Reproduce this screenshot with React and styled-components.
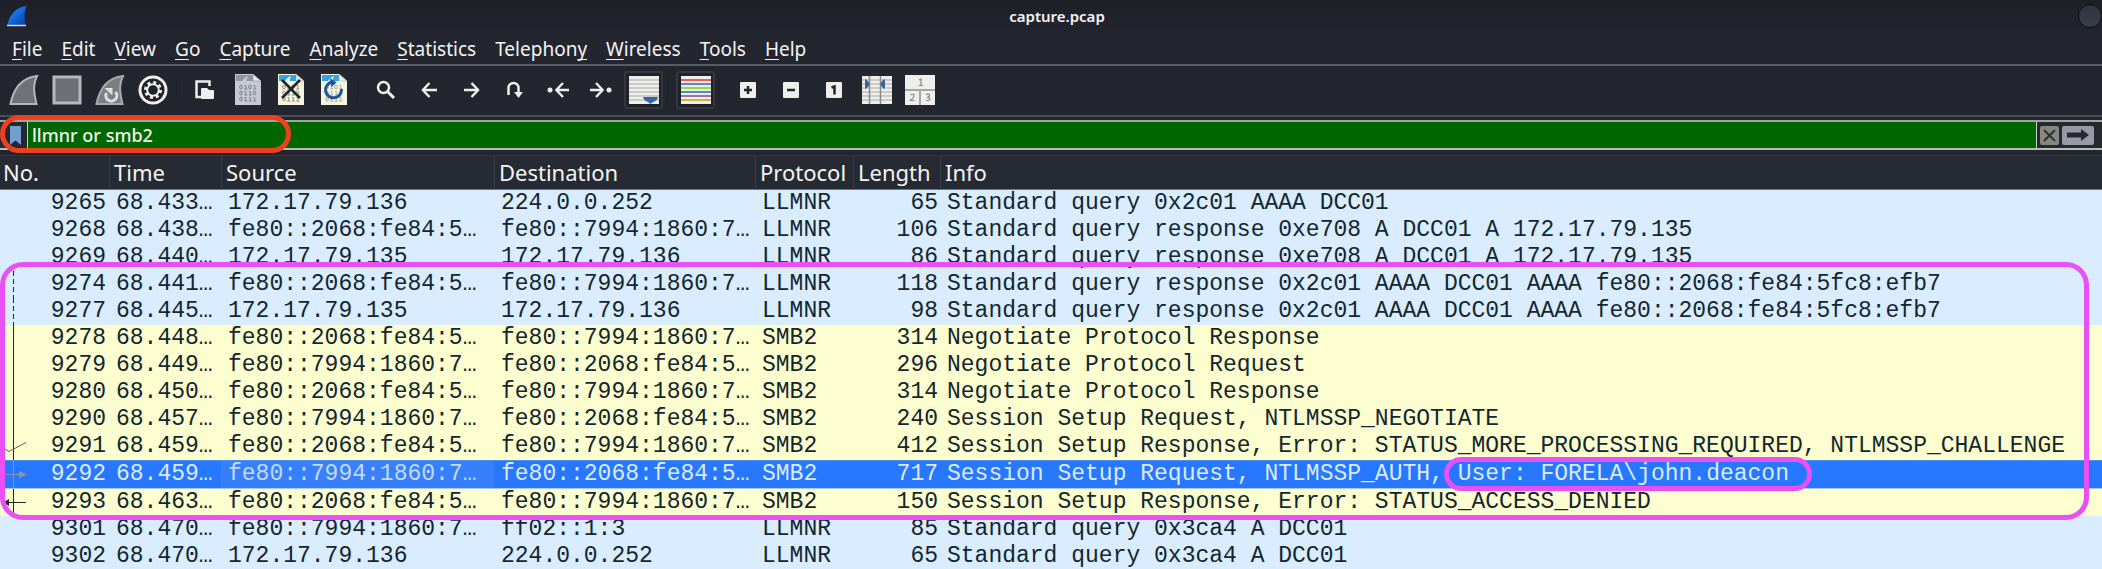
import React from 'react';
import styled, { createGlobalStyle, css } from 'styled-components';

const GlobalStyle = createGlobalStyle`
  * { box-sizing: border-box; }
  body {
    margin: 0;
    height: 100vh;
    overflow: hidden;
    background: #daecff;
    color: #f4f4f4;
    font-family: "Noto Sans", sans-serif;
  }
`;

const Window = styled.main`
  display: flex;
  flex-direction: column;
  min-width: 0;
`;

const TitleBar = styled.header`
  display: grid;
  grid-template-columns: 1fr auto 1fr;
  align-items: center;
  height: 32px;
  padding-left: 6px;
  background: linear-gradient(#1e2028, #22252e);
`;

const Title = styled.h1`
  margin: 0;
  padding-left: 6px;
  font-size: 15px;
  line-height: 20px;
  font-weight: 600;
`;

const WindowButton = styled.button`
  justify-self: end;
  width: 24px;
  height: 24px;
  padding: 0;
  border: 1px solid #0d0f13;
  border-radius: 50%;
  background: linear-gradient(#2f343e, #3a3f4b);
`;

const MenuBar = styled.nav`
  display: flex;
  gap: 19px;
  height: 34px;
  padding: 2px 12px 0;
  background: #23262f;
  border-bottom: 2px solid #595c65;
`;

const MenuItem = styled.button`
  padding: 0;
  border: 0;
  background: none;
  color: inherit;
  font: 19px/28px "Noto Sans", sans-serif;
  height: 30px;

  u {
    text-underline-offset: 3px;
    text-decoration-thickness: 1px;
    text-decoration-skip-ink: none;
  }
`;

const Toolbar = styled.div`
  display: flex;
  align-items: center;
  gap: 4px;
  height: 51px;
  padding: 0 4px 2px;
  background: #23262f;
  border-bottom: 2px solid #4b4f58;
`;

const ToolButton = styled.button`
  display: flex;
  align-items: center;
  justify-content: center;
  width: 39px;
  height: 38px;
  padding: 0;
  border: 2px solid ${(p) => (p.$on ? '#343841' : 'transparent')};
  border-radius: 3px;
  background: ${(p) => (p.$on ? '#1f2229' : 'none')};

  svg { display: block; flex: none; }
`;

const Separator = styled.span`
  width: 5px;
  height: 24px;
  border-left: 1px solid #1d2027;
`;

const FilterBar = styled.form`
  position: relative;
  display: flex;
  height: 38px;
  margin: 0;
  padding: 3px 0 5px;
  background: #22252d;
`;

const FilterFrame = styled.div`
  display: flex;
  align-items: center;
  flex: 1;
  min-width: 0;
  border-top: 2px solid #a2a6a3;
  border-bottom: 2px solid #b9bdb9;
  background: #25282f;
`;

const BookmarkButton = styled.button`
  display: flex;
  justify-content: flex-end;
  width: 27px;
  padding: 0 6px 0 0;
  border: 0;
  background: none;
`;

const FilterInput = styled.input`
  flex: 1;
  min-width: 0;
  align-self: stretch;
  padding: 0 4px;
  border: solid #c4d0c4;
  border-width: 0 1px;
  border-radius: 0;
  outline: 0;
  background: #006600;
  color: #f2f6ef;
  font: 500 18px/26px "Noto Sans", sans-serif;
`;

const FilterActions = styled.div`
  display: flex;
  gap: 3px;
  padding: 0 8px 0 3px;
`;

const FilterButton = styled.button`
  display: flex;
  align-items: center;
  justify-content: center;
  width: ${(p) => p.$width};
  height: 19px;
  padding: 0;
  border: 0;
  border-radius: 2px;
  background: ${(p) => p.$fill};
`;

const FilterHighlight = styled.span`
  position: absolute;
  inset: -2px auto 2px 0;
  width: 291px;
  border: 5px solid #ea411f;
  border-radius: 19px;
  pointer-events: none;
`;

const PacketList = styled.section`
  position: relative;
`;

const PacketTable = styled.table`
  width: 100%;
  table-layout: fixed;
  border-collapse: separate;
  border-spacing: 0;
`;

const Column = styled.col`
  width: ${(p) => p.$width};
`;

const HeaderCell = styled.th`
  height: 35px;
  padding: 0 0 2px ${(p) => (p.$first ? '3px' : '4px')};
  border-top: 1px solid #353840;
  border-bottom: 1px solid #70757e;
  border-left: ${(p) => (p.$first ? '0' : '1px solid #3a3e46')};
  background: #262a33;
  text-align: left;
  white-space: nowrap;
  font-size: 22px;
  line-height: 30px;
  font-weight: 400;
`;

const Cell = styled.td`
  height: 27px;
  padding: 0 2px 0 7px;
  text-align: ${(p) => (p.$right ? 'right' : 'left')};
  white-space: nowrap;
`;

const NumberCell = styled(Cell)`
  padding: 0 3px 0 0;
`;

const NumberContent = styled.div`
  display: flex;
  justify-content: space-between;
  height: 27px;
`;

const PacketRow = styled.tr`
  background: ${(p) => (p.$kind === 'LLMNR' ? '#daecff' : '#fdfecf')};
  color: #12272e;
  font-family: "Liberation Mono", monospace;
  font-size: 23px;
  line-height: 27px;

  ${(p) => p.$selected && css`
    background: #2777ff;
    color: #dbeaff;

    ${Cell} {
      border-top: 1px solid #4d8fee;
      border-bottom: 1px solid #a9c8ef;
    }
    ${Cell}:nth-child(3) {
      background: #3880fb;
      color: #c3dafd;
    }
  `}
`;

const ConversationHighlight = styled.div`
  position: absolute;
  inset: 107px 13px auto 0;
  height: 258px;
  border: 5px solid #e950f8;
  border-radius: 23px;
  pointer-events: none;
`;

const UserHighlight = styled.span`
  position: relative;

  &::after {
    content: "";
    position: absolute;
    inset: -4px -23px -4px -14px;
    border: 5px solid #e950f8;
    border-radius: 17px;
  }
`;

const Svg = ({ w = 30, h = 30, children }) => (
  <svg width={w} height={h} viewBox={`0 0 ${w} ${h}`} fill="none" aria-hidden="true">
    {children}
  </svg>
);

const FIN = 'M1.5 29 C4 16 11 3 28 1 C24.500 8 24 15 27.500 29 Z';

const LogoIcon = () => (
  <Svg w={22} h={22}>
    <defs>
      <linearGradient id="logo" x1="0" y1="0" x2="1" y2="1">
        <stop offset="0" stopColor="#4a9cf4" />
        <stop offset="0.5" stopColor="#1268dc" />
        <stop offset="1" stopColor="#063a9c" />
      </linearGradient>
    </defs>
    <path d="M1 20.500 C4 10 9 2.500 20.500 1 C18 7 18 13 20 20.500 Z" fill="url(#logo)" />
    <path d="M1 20.500 H20" stroke="#c4d8f4" strokeWidth="1.500" />
  </Svg>
);

const StartIcon = () => (
  <Svg><path d={FIN} fill="#6f727a" stroke="#b4b6bb" strokeWidth="2" /></Svg>
);

const StopIcon = () => (
  <Svg><rect x="2" y="2" width="26" height="26" fill="#6c6f77" stroke="#b6b8bd" strokeWidth="3" /></Svg>
);

const RestartIcon = () => (
  <Svg>
    <path d={FIN} fill="#7b7e85" stroke="#a9abb1" strokeWidth="2" />
    <path d="M20.500 17 A5.500 5.500 0 1 1 11.500 18" stroke="#e0e1e4" strokeWidth="3" />
    <path d="M9.500 13 H17.500 V20.500 Z" fill="#e0e1e4" />
  </Svg>
);

const OptionsIcon = () => (
  <Svg>
    <circle cx="15" cy="15" r="14.500" fill="#f0f0f0" />
    <circle cx="15" cy="15" r="11.500" fill="#202228" />
    <circle cx="15" cy="15" r="7.500" stroke="#f0f0f0" strokeWidth="3" strokeDasharray="3 2.890" />
    <circle cx="15" cy="15" r="5.800" stroke="#f0f0f0" strokeWidth="2" />
  </Svg>
);

const OpenIcon = () => (
  <Svg w={20} h={20}>
    <path d="M6 17 H1.500 V1.500 H14.500 V6" stroke="#eeeeec" strokeWidth="2.500" />
    <path d="M6 9 Q6 8 7 8 H12 L14 10 H18 Q19 10 19 11 V18 Q19 19 18 19 H7 Q6 19 6 18 Z" fill="#eeeeec" />
  </Svg>
);

const bits = ['0101', '0110', '0111'];

const FileSheet = ({ paper, band, ink, children }) => (
  <Svg w={26} h={31}>
    <path d="M0 0 H18 L26 7 V31 H0 Z" fill={paper} />
    <path d="M1 1 H18 V7 H1 Z" fill={band} />
    <path d="M6 9 Q8 4 13 2 Q11 5 12 9 Z" fill={paper} />
    <path d="M18 0 L26 7 H18 Z" fill="#e8ecee" stroke={ink} strokeWidth="0.500" />
    {bits.map((row, r) => row.split('').map((bit, c) => (bit === '0'
      ? <ellipse key={`${r}${c}`} cx={6 + c * 4.500} cy={13 + r * 6} rx="1.300" ry="1.900" stroke={ink} />
      : <path key={`${r}${c}`} d={`M${5 + c * 4.500} ${11.5 + r * 6} h1.300 v3.500 m-1.500 0 h3`} stroke={ink} />)))}
    {children}
  </Svg>
);

const SaveIcon = () => <FileSheet paper="#c6c9d1" band="#92959e" ink="#7f838c" />;

const CloseIcon = () => (
  <FileSheet paper="#f5f5e0" band="#2ea5e0" ink="#8f9088">
    <path d="M4 6 L22 24 M22 6 L4 24" stroke="#232629" strokeWidth="2.500" />
  </FileSheet>
);

const ReloadIcon = () => (
  <FileSheet paper="#f5f5e0" band="#2ea5e0" ink="#a9aa9f">
    <path d="M20.500 15 A8 8 0 1 1 11 8" stroke="#23539c" strokeWidth="3" />
    <path d="M9 4 L15.500 8.500 L10.500 13 Z" fill="#23539c" />
  </FileSheet>
);

const FindIcon = () => (
  <Svg w={20} h={20}>
    <circle cx="7.500" cy="7.500" r="5.500" stroke="#eeeeec" strokeWidth="2.500" />
    <path d="M11.500 11.500 L18 18" stroke="#eeeeec" strokeWidth="3" />
  </Svg>
);

const ARROW = { stroke: '#eeeeec', strokeWidth: 2.5, strokeLinejoin: 'round' };

const BackIcon = () => <Svg w={16} h={16}><path d="M16 8 H2 M8.500 1 L1.800 8 L8.500 15" {...ARROW} /></Svg>;
const ForwardIcon = () => <Svg w={16} h={16}><path d="M0 8 H14 M7.500 1 L14.200 8 L7.500 15" {...ARROW} /></Svg>;

const JumpIcon = () => (
  <Svg w={18} h={18}>
    <path d="M2.500 14 V7 A5 5 0 0 1 12.500 7 V12" stroke="#eeeeec" strokeWidth="2.500" />
    <path d="M8 11 H17 L12.500 17 Z" fill="#eeeeec" />
  </Svg>
);

const FirstIcon = () => (
  <Svg w={22} h={16}>
    <circle cx="3" cy="8" r="2.500" fill="#eeeeec" />
    <path d="M22 8 H10 M16 1 L9.300 8 L16 15" {...ARROW} />
  </Svg>
);

const LastIcon = () => (
  <Svg w={22} h={16}>
    <circle cx="19" cy="8" r="2.500" fill="#eeeeec" />
    <path d="M0 8 H12 M6 1 L12.700 8 L6 15" {...ARROW} />
  </Svg>
);

const Lines = ({ colors }) => (
  <>
    <rect width="30" height="28" fill="#eeeeec" />
    {colors.map((c, i) => <path key={i} d={`M0 ${4 + i * 4} H30`} stroke={c} strokeWidth="1.500" />)}
  </>
);

const GREY = Array(6).fill('#bfc0bc');

const AutoScrollIcon = () => (
  <Svg w={30} h={28}>
    <Lines colors={GREY} />
    <path d="M14 21 H29 Q28 25 24 26 L21.500 28 L19 26 Q15 25 14 21 Z" fill="#3465a4" />
  </Svg>
);

const ColorizeIcon = () => (
  <Svg w={30} h={28}>
    <Lines colors={['#ef2929', '#3465a4', '#73d216', '#3465a4', '#75507b', '#c4a000']} />
  </Svg>
);

const ZoomBox = ({ children }) => (
  <Svg w={16} h={16}>
    <rect width="16" height="16" rx="1" fill="#eeeeec" />
    {children}
  </Svg>
);

const ZoomInIcon = () => <ZoomBox><path d="M4 8 H12 M8 4 V12" stroke="#23262f" strokeWidth="2.500" /></ZoomBox>;
const ZoomOutIcon = () => <ZoomBox><path d="M4 8 H12" stroke="#23262f" strokeWidth="2.500" /></ZoomBox>;
const ZoomResetIcon = () => <ZoomBox><path d="M5.500 5.500 L8.500 4.500 V12.500" stroke="#23262f" strokeWidth="2.500" /></ZoomBox>;

const ResizeIcon = () => (
  <Svg w={30} h={28}>
    <Lines colors={GREY} />
    <path d="M7.500 0 V28 M18.500 0 V28" stroke="#8a8c87" strokeWidth="1.500" />
    <path d="M3 3 Q7 5 7.500 8.500 Q7 11 3 13 Z M23 3 Q19 5 18.500 8.500 Q19 11 23 13 Z" fill="#3465a4" />
  </Svg>
);

const LayoutIcon = () => (
  <Svg>
    <rect width="30" height="30" fill="#eeeeec" />
    <path d="M0 15 H30 M15 15 V30" stroke="#a5a7a3" strokeWidth="2" />
    <g stroke="#85878a" strokeWidth="1.200">
      <path d="M14 5 L16 4 V10.500 M13.500 10.500 H18" />
      <path d="M5.500 20 Q7.500 18.500 9 20 Q9.500 22 5.500 25.500 H9.500" />
      <path d="M21 19.500 Q25 18.500 24.500 21 Q24 22.300 22 22.300 Q25 22.500 24.800 24.500 Q24 26 21 25.300" />
    </g>
  </Svg>
);

const toolGroups = [
  [['Start capture', StartIcon], ['Stop capture', StopIcon], ['Restart capture', RestartIcon], ['Capture options', OptionsIcon]],
  [['Open', OpenIcon], ['Save', SaveIcon], ['Close', CloseIcon], ['Reload', ReloadIcon]],
  [['Find packet', FindIcon], ['Back', BackIcon], ['Forward', ForwardIcon], ['Go to packet', JumpIcon],
    ['First packet', FirstIcon], ['Last packet', LastIcon], ['Auto scroll', AutoScrollIcon, true]],
  [['Colorize', ColorizeIcon, true]],
  [['Zoom in', ZoomInIcon], ['Zoom out', ZoomOutIcon], ['Normal size', ZoomResetIcon],
    ['Resize columns', ResizeIcon], ['Reset layout', LayoutIcon]],
];

const menus = [['', 'F', 'ile'], ['', 'E', 'dit'], ['', 'V', 'iew'], ['', 'G', 'o'], ['', 'C', 'apture'],
  ['', 'A', 'nalyze'], ['', 'S', 'tatistics'], ['Telephon', 'y', ''], ['', 'W', 'ireless'], ['', 'T', 'ools'], ['', 'H', 'elp']];

const columns = [['No.', '109px'], ['Time', '112px'], ['Source', '273px'], ['Destination', '261px'],
  ['Protocol', '98px'], ['Length', '87px'], ['Info', 'auto']];

const A = 'fe80::2068:fe84:5…';
const B = 'fe80::7994:1860:7…';
const IP5 = '172.17.79.135';
const IP6 = '172.17.79.136';

const packets = [
  [9265, '68.433…', IP6, '224.0.0.252', 'LLMNR', 65, 'Standard query 0x2c01 AAAA DCC01'],
  [9268, '68.438…', A, B, 'LLMNR', 106, 'Standard query response 0xe708 A DCC01 A 172.17.79.135'],
  [9269, '68.440…', IP5, IP6, 'LLMNR', 86, 'Standard query response 0xe708 A DCC01 A 172.17.79.135'],
  [9274, '68.441…', A, B, 'LLMNR', 118, 'Standard query response 0x2c01 AAAA DCC01 AAAA fe80::2068:fe84:5fc8:efb7', 'dashed'],
  [9277, '68.445…', IP5, IP6, 'LLMNR', 98, 'Standard query response 0x2c01 AAAA DCC01 AAAA fe80::2068:fe84:5fc8:efb7', 'dashed'],
  [9278, '68.448…', A, B, 'SMB2', 314, 'Negotiate Protocol Response', 'line'],
  [9279, '68.449…', B, A, 'SMB2', 296, 'Negotiate Protocol Request', 'line'],
  [9280, '68.450…', A, B, 'SMB2', 314, 'Negotiate Protocol Response', 'line'],
  [9290, '68.457…', B, A, 'SMB2', 240, 'Session Setup Request, NTLMSSP_NEGOTIATE', 'line'],
  [9291, '68.459…', A, B, 'SMB2', 412, 'Session Setup Response, Error: STATUS_MORE_PROCESSING_REQUIRED, NTLMSSP_CHALLENGE', 'check'],
  [9292, '68.459…', B, A, 'SMB2', 717, 'Session Setup Request, NTLMSSP_AUTH, ', 'request', 'User: FORELA\\john.deacon'],
  [9293, '68.463…', A, B, 'SMB2', 150, 'Session Setup Response, Error: STATUS_ACCESS_DENIED', 'response'],
  [9301, '68.470…', B, 'ff02::1:3', 'LLMNR', 85, 'Standard query 0x3ca4 A DCC01'],
  [9302, '68.470…', IP6, '224.0.0.252', 'LLMNR', 65, 'Standard query 0x3ca4 A DCC01'],
];

const RelationMark = ({ type }) => {
  const ink = type === 'request' ? '#8c95a5' : '#1c2b30';
  return (
    <Svg w={28} h={27}>
      {type && <path d="M13.500 0 V27" stroke={ink} strokeDasharray={type === 'dashed' ? '5 3' : undefined} />}
      {type === 'check' && <path d="M3 15 L9 18.500 L26 9.500" stroke="#59635c" />}
      {type === 'request' && <><path d="M0 13.500 H20" stroke={ink} /><path d="M19 10 L27 13.500 L19 17 Z" fill={ink} /></>}
      {type === 'response' && <><path d="M5 13.500 H26" stroke={ink} /><path d="M9 10 L3 13.500 L9 17 Z" fill={ink} /></>}
    </Svg>
  );
};

const Packet = ({ data }) => {
  const [no, time, source, destination, protocol, length, info, mark, user] = data;
  return (
    <PacketRow $kind={protocol} $selected={Boolean(user)}>
      <NumberCell>
        <NumberContent>
          <RelationMark type={mark} />
          <span>{no}</span>
        </NumberContent>
      </NumberCell>
      <Cell>{time}</Cell>
      <Cell>{source}</Cell>
      <Cell>{destination}</Cell>
      <Cell>{protocol}</Cell>
      <Cell $right>{length}</Cell>
      <Cell>{info}{user && <UserHighlight>{user}</UserHighlight>}</Cell>
    </PacketRow>
  );
};

export default function App() {
  return (
    <>
      <GlobalStyle />
      <Window>
        <TitleBar>
          <LogoIcon />
          <Title>capture.pcap</Title>
          <WindowButton aria-label="Close window" />
        </TitleBar>
        <MenuBar aria-label="Main menu">
          {menus.map(([before, key, after]) => (
            <MenuItem key={before + key + after}>{before}<u>{key}</u>{after}</MenuItem>
          ))}
        </MenuBar>
        <Toolbar role="toolbar" aria-label="Capture tools">
          {toolGroups.map((group, i) => (
            <React.Fragment key={i}>
              {i > 0 && <Separator />}
              {group.map(([label, Icon, on]) => (
                <ToolButton key={label} aria-label={label} $on={on}><Icon /></ToolButton>
              ))}
            </React.Fragment>
          ))}
        </Toolbar>
        <FilterBar onSubmit={(e) => e.preventDefault()}>
          <FilterFrame>
            <BookmarkButton type="button" aria-label="Filter bookmarks">
              <Svg w={11} h={19}><path d="M0 0 H11 V19 L5.500 14.500 L0 19 Z" fill="#729fcf" /></Svg>
            </BookmarkButton>
            <FilterInput aria-label="Display filter" defaultValue="llmnr or smb2" spellCheck={false} />
            <FilterActions>
              <FilterButton type="button" aria-label="Clear filter" $width="19px" $fill="#86877f">
                <Svg w={13} h={13}><path d="M1 1 L12 12 M12 1 L1 12" stroke="#2e3036" strokeWidth="2" /></Svg>
              </FilterButton>
              <FilterButton type="submit" aria-label="Apply filter" $width="32px" $fill="#9799a3">
                <Svg w={22} h={12}><path d="M0 3.500 H14 V0 L22 6 L14 12 V8.500 H0 Z" fill="#262932" /></Svg>
              </FilterButton>
            </FilterActions>
          </FilterFrame>
          <FilterHighlight />
        </FilterBar>
        <PacketList>
          <PacketTable>
            <colgroup>
              {columns.map(([name, width]) => <Column key={name} $width={width} />)}
            </colgroup>
            <thead>
              <tr>
                {columns.map(([name], i) => <HeaderCell key={name} scope="col" $first={i === 0}>{name}</HeaderCell>)}
              </tr>
            </thead>
            <tbody>
              {packets.map((p) => <Packet key={p[0]} data={p} />)}
            </tbody>
          </PacketTable>
          <ConversationHighlight />
        </PacketList>
      </Window>
    </>
  );
}
